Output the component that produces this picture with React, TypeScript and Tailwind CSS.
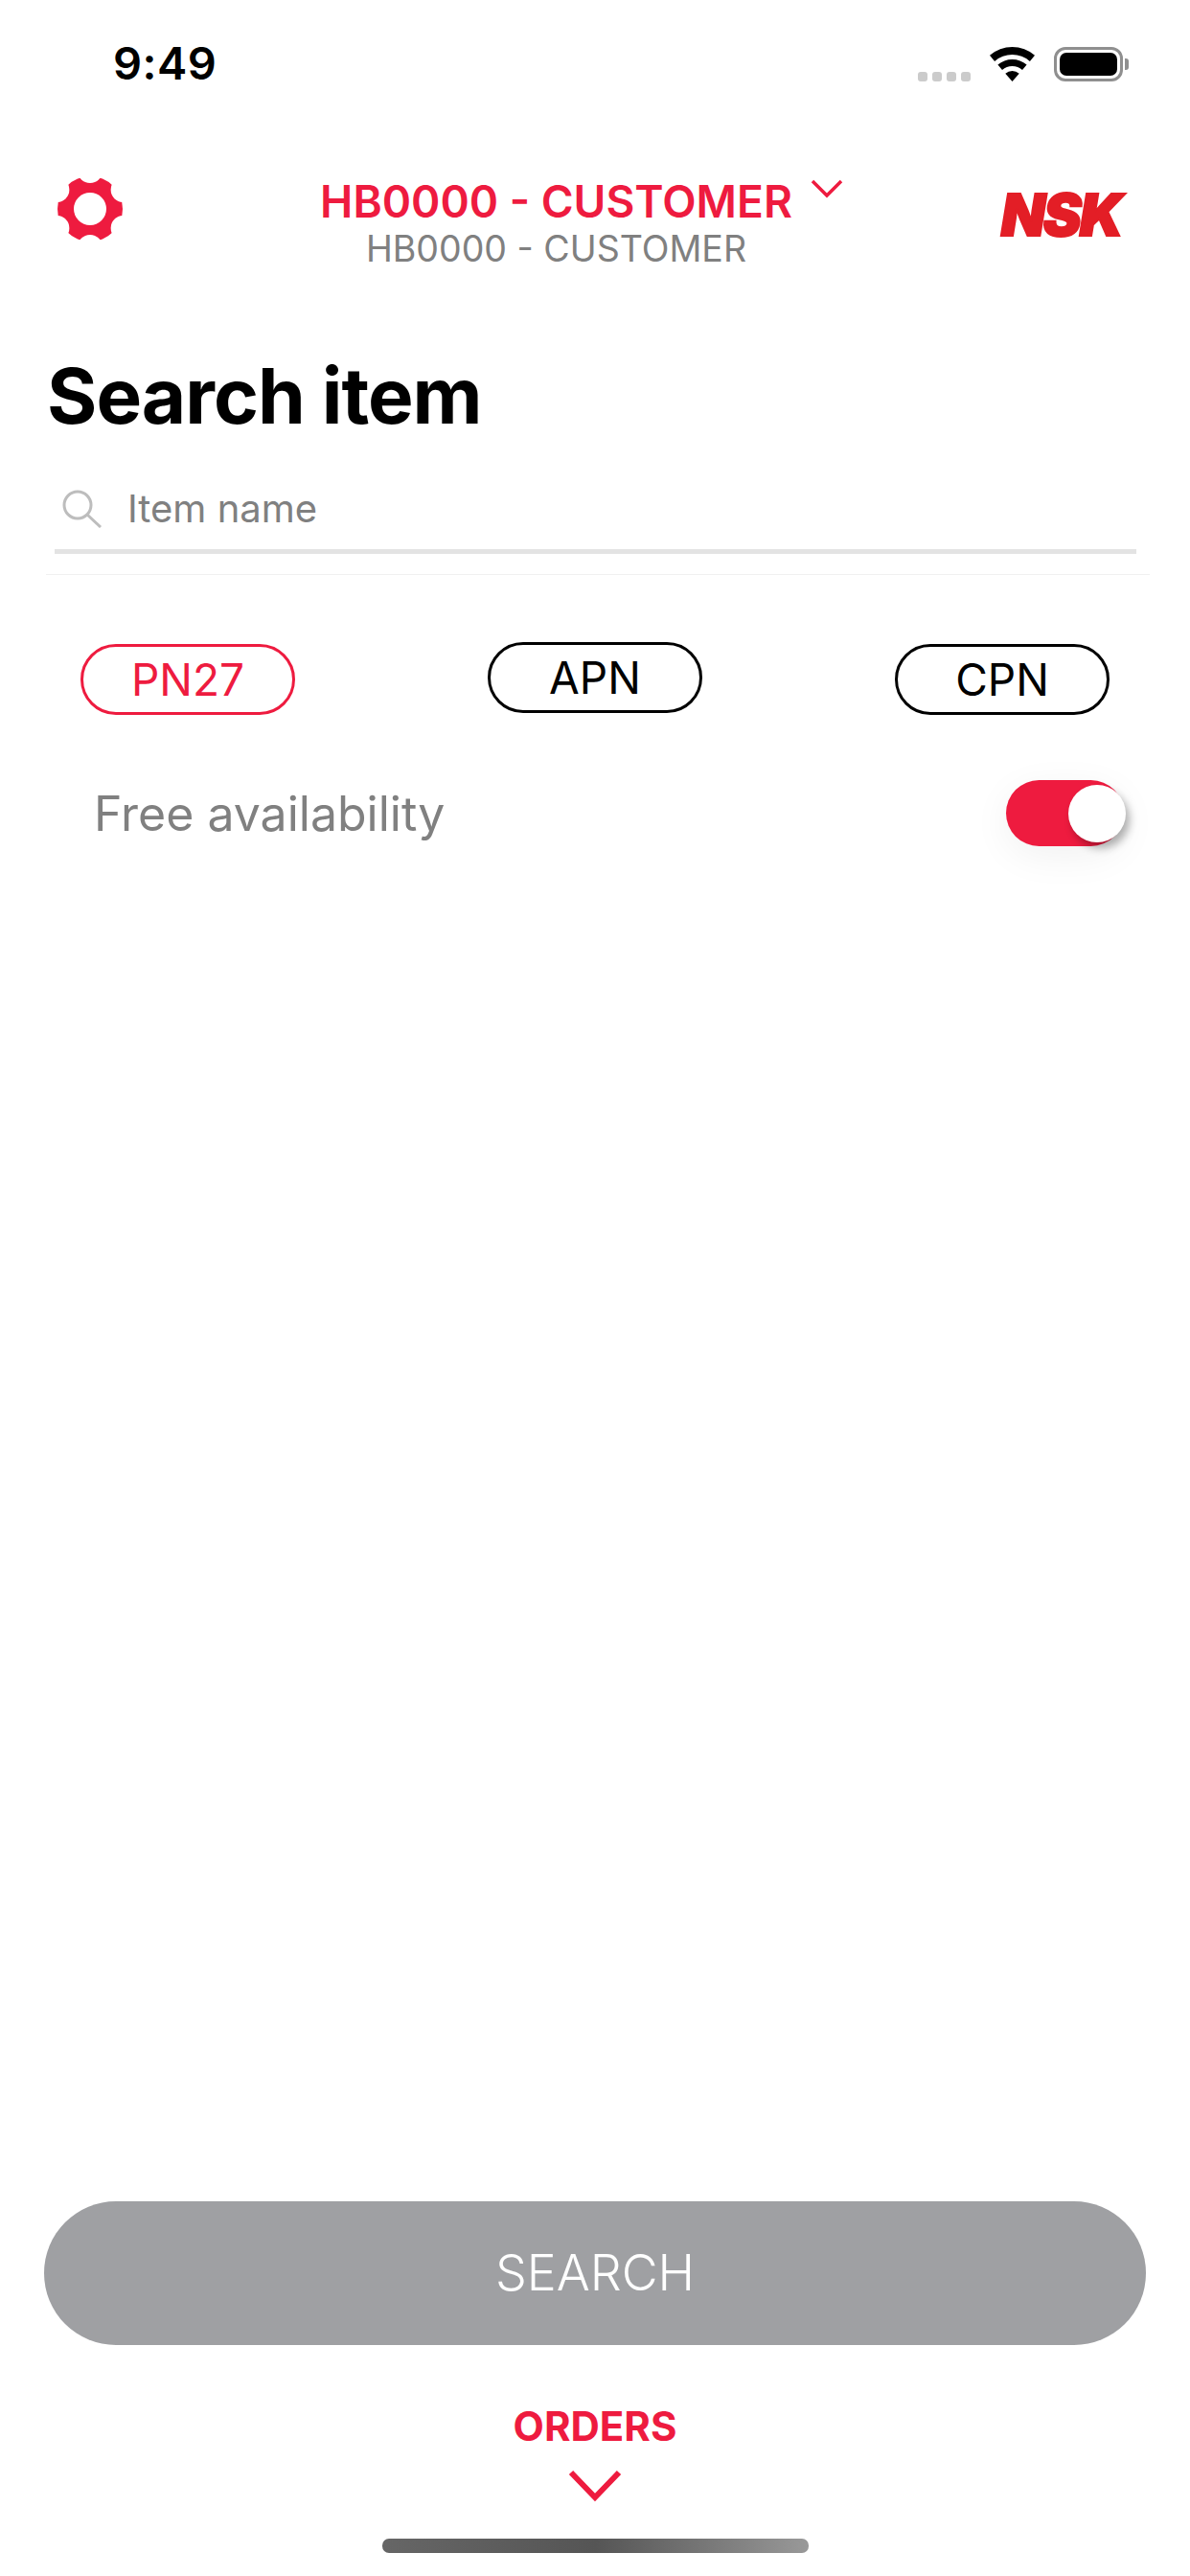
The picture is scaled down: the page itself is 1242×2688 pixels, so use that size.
const font = { fontFamily: "Inter, 'Liberation Sans', sans-serif" };

function Gear() {
  const notches = [90, 150, 210, 270, 330, 30].map((a) => [
    34 + 40 * Math.cos((a * Math.PI) / 180),
    34 + 40 * Math.sin((a * Math.PI) / 180),
  ]);
  return (
    <svg width="68" height="68" viewBox="0 0 68 68" className="shrink-0">
      <defs>
        <mask id="gear-mask">
          <circle cx="34" cy="34" r="34" fill="white" />
          {notches.map(([x, y], i) => (
            <circle key={i} cx={x} cy={y} r="13" fill="black" />
          ))}
          <circle cx="34" cy="34" r="17" fill="black" />
        </mask>
      </defs>
      <rect width="68" height="68" fill="#ee1b3f" mask="url(#gear-mask)" />
    </svg>
  );
}

function Wifi() {
  return (
    <svg width="47" height="36" viewBox="0 0 47 36" fill="#000">
      <path d="M0 8.8A36 36 0 0 1 47 8.8L41.9 14.9A28 28 0 0 0 5.1 14.9Z" />
      <path d="M8.4 18.6A23 23 0 0 1 38.6 18.6L34 23.9A16 16 0 0 0 13 23.9Z" />
      <path d="M16.3 27.7A11 11 0 0 1 30.7 27.7L23.5 36Z" />
    </svg>
  );
}

function Chip({ label, active, className }: { label: string; active?: boolean; className?: string }) {
  return (
    <div
      className={`flex h-[74px] w-[224px] items-center justify-center rounded-[37px] border-[3px] text-[46px] ${
        active ? "border-[#ee1b3f] text-[#ee1b3f]" : "border-black text-black"
      } ${className ?? ""}`}
    >
      {label}
    </div>
  );
}

export default function App() {
  return (
    <div className="flex h-[2688px] w-[1242px] flex-col overflow-hidden bg-white" style={font}>
      {/* status bar */}
      <div className="flex h-[130px] shrink-0 items-center justify-between pl-[118px] pr-[64px]">
        <span className="text-[47px] font-semibold leading-none tracking-[0.5px] text-black">9:49</span>
        <div className="mt-[4px] flex items-end">
          <div className="mb-0 mr-[20px] flex gap-[5px] pb-0">
            <span className="h-[10px] w-[10px] rounded-[3px] bg-[#cbcbcb]" />
            <span className="h-[10px] w-[10px] rounded-[3px] bg-[#cbcbcb]" />
            <span className="h-[10px] w-[10px] rounded-[3px] bg-[#cbcbcb]" />
            <span className="h-[10px] w-[10px] rounded-[3px] bg-[#cbcbcb]" />
          </div>
          <Wifi />
          <div className="ml-[20px] flex items-center">
            <div className="flex h-[36px] w-[72px] items-stretch rounded-[12px] border-[3px] border-[#8f8f8f] p-[3px]">
              <div className="flex-1 rounded-[7px] bg-black" />
            </div>
            <span className="ml-[2px] h-[12px] w-[4px] rounded-r-[3px] bg-[#8f8f8f]" />
          </div>
        </div>
      </div>

      {/* header */}
      <div className="mt-[54px] flex shrink-0 items-start pl-[60px] pr-[60px]">
        <Gear />
        <div className="flex flex-1 flex-col items-center">
          <div className="relative mt-[-2px] text-[46px] font-semibold leading-[56px] text-[#ee1b3f]">
            HB0000 - CUSTOMER
            <svg
              width="34"
              height="20"
              viewBox="0 0 34 20"
              className="absolute left-[calc(100%+19px)] top-[5px]"
              fill="none"
              stroke="#ee1b3f"
              strokeWidth="3.5"
            >
              <polyline points="2,2 17,17 32,2" />
            </svg>
          </div>
          <div className="mt-[-1px] text-[37.5px] leading-[46px] text-[#808080]">HB0000 - CUSTOMER</div>
        </div>
        <div className="mt-[12px] flex h-[56px] w-[149px] shrink-0 items-center justify-center">
          <span className="text-[60px] font-black italic leading-none tracking-[-2px] text-[#e31e26] [-webkit-text-stroke:2px_#e31e26]">
            NSK
          </span>
        </div>
      </div>

      {/* title */}
      <h1 className="mt-[82px] pl-[49px] text-[80px] font-bold leading-[96px] tracking-[-1px] text-black">Search item</h1>

      {/* search field */}
      <div className="mt-[38px] flex h-[64px] items-center gap-[26px] pl-[65px]">
        <svg width="42" height="40" viewBox="0 0 42 40" fill="none" stroke="#bdbdbd" strokeWidth="3" className="shrink-0">
          <circle cx="16" cy="16" r="14" />
          <line x1="26" y1="26" x2="40" y2="39" />
        </svg>
        <span className="text-[40px] leading-none text-[#808080]">Item name</span>
      </div>
      <div className="ml-[57px] mt-[10px] h-[5px] w-[1129px] bg-[#e3e3e3]" />
      <div className="ml-[48px] mt-[21px] h-[1px] w-[1152px] bg-[#f0f0f0]" />

      {/* filter chips */}
      <div className="mt-[72px] flex items-start justify-between pl-[84px] pr-[84px]">
        <Chip label="PN27" active />
        <Chip label="APN" className="mt-[-2px]" />
        <Chip label="CPN" />
      </div>

      {/* availability */}
      <div className="mt-[68px] flex items-center justify-between pl-[98px] pr-[69px]">
        <span className="text-[50px] leading-none text-[#808080]">Free availability</span>
        <div className="flex h-[69px] w-[123px] items-center justify-end rounded-[35px] bg-[#ee1b3f] shadow-[0_10px_40px_rgba(0,0,0,0.06)]">
          <span className="h-[60px] w-[60px] translate-x-[2px] rounded-full bg-white shadow-[4px_6px_8px_rgba(0,0,0,0.3)]" />
        </div>
      </div>

      {/* bottom */}
      <div className="mt-auto flex flex-col items-center">
        <div className="flex h-[150px] w-[1150px] items-center justify-center rounded-[75px] bg-[#9fa0a3] text-[52px] font-light text-white">
          SEARCH
        </div>
        <div className="mt-[60px] text-[42px] font-bold leading-[50px] text-[#ee1b3f]">ORDERS</div>
        <svg width="56" height="34" viewBox="0 0 56 34" className="mt-[20px]" fill="none" stroke="#ee1b3f" strokeWidth="6">
          <polyline points="3,3 28,29 53,3" />
        </svg>
        <div className="mb-[24px] mt-[38px] h-[15px] w-[445px] rounded-[7px] bg-gradient-to-r from-[#666666] via-[#555555] to-[#999999]" />
      </div>
    </div>
  );
}
